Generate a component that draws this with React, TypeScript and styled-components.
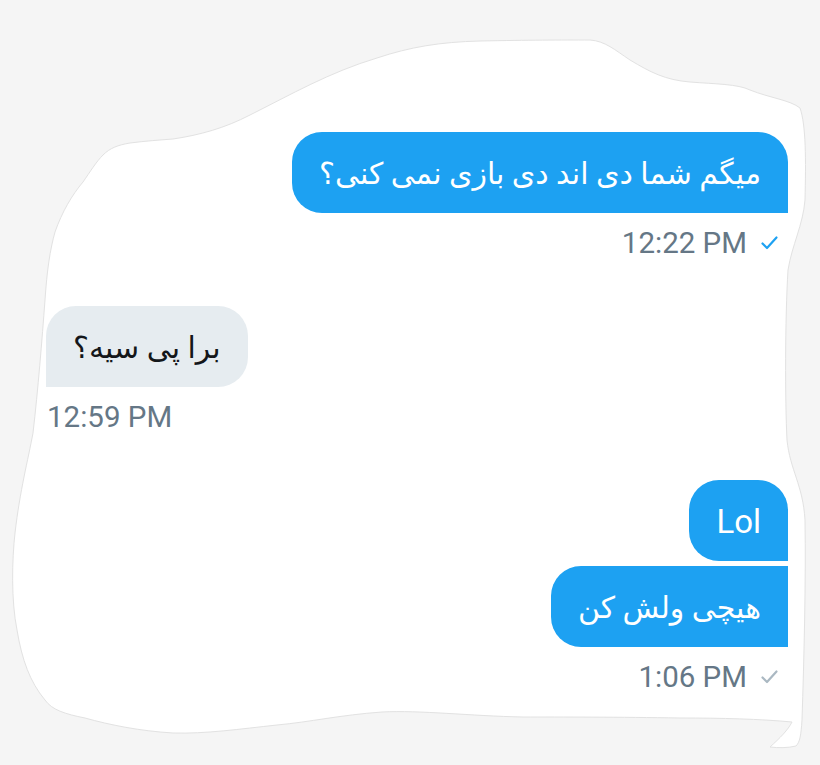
import React from 'react';
import styled, { createGlobalStyle } from 'styled-components';

const GlobalStyle = createGlobalStyle`
  html, body {
    margin: 0;
    padding: 0;
    background: #f5f5f5;
  }
`;

const StyledPage = styled.div`
  position: relative;
  width: 820px;
  height: 765px;
  overflow: hidden;
  background: #f5f5f5;
  font-family: Roboto, 'DejaVu Sans', sans-serif;
`;

const StyledPaper = styled.svg`
  position: absolute;
  inset: 0;
`;

const StyledThread = styled.div`
  position: relative;
  display: flex;
  flex-direction: column;
  padding: 132px 32px 0 46px;
`;

const StyledGroup = styled.div<{ $mine?: boolean }>`
  display: flex;
  flex-direction: column;
  align-items: ${(p) => (p.$mine ? 'flex-end' : 'flex-start')};
  gap: 5px;
  & + & {
    margin-top: 43px;
  }
`;

type Corner = 'first' | 'last' | 'single';

const StyledBubble = styled.div<{ $mine?: boolean; $place: Corner; $latin?: boolean }>`
  box-sizing: border-box;
  height: 81px;
  display: flex;
  align-items: center;
  padding: 2px ${(p) => (p.$latin ? '27px' : '27px')} 0;
  font-size: ${(p) => (p.$latin ? '33px' : '30px')};
  line-height: 41px;
  white-space: nowrap;
  background: ${(p) => (p.$mine ? '#1da1f2' : '#e6ecf0')};
  color: ${(p) => (p.$mine ? '#ffffff' : '#14171a')};
  border-radius: ${(p) => {
    if (!p.$mine) return '30px 30px 30px 0';
    if (p.$place === 'last') return '30px 0 0 30px';
    return '30px 30px 0 30px';
  }};
`;

const StyledMeta = styled.div`
  display: flex;
  align-items: center;
  gap: 14px;
  margin-top: 5px;
  height: 40px;
  font-size: 29.5px;
  color: #657786;
  padding-left: 1px;
`;

const Check = ({ read }: { read?: boolean }) => (
  <svg width="17" height="16" viewBox="0 0 17 16" style={{ marginRight: 10 }}>
    <path
      d="M1.5 8.5 L6 13 L15.5 2.5"
      fill="none"
      stroke={read ? '#1da1f2' : '#aab8c2'}
      strokeWidth="2.2"
      strokeLinecap="round"
      strokeLinejoin="round"
    />
  </svg>
);

const paperPath =
  'M130 143 C145 141 160 140 173 139 C200 135 225 128 250 115 C290 95 330 72 377 58 ' +
  'C410 47 440 42 480 41 C530 40 560 40 590 40 C605 41 615 50 630 60 C650 72 665 80 690 82 ' +
  'C715 84 738 84 750 90 C770 98 790 100 800 108 C806 125 806 160 805 200 ' +
  'C803 225 792 245 788 270 C785 320 785 400 787 440 C790 470 803 485 805 520 ' +
  'C806 580 804 660 802 720 C801 735 800 742 796 746 C788 748 778 748 770 747 ' +
  'C780 738 788 730 792 722 C760 719 722 718 680 718 C620 717 560 717 523 717 ' +
  'C470 716 420 710 382 712 C340 715 310 722 277 725 C240 729 205 734 173 733 ' +
  'C140 731 110 725 85 718 C65 714 52 710 45 700 C30 682 22 660 17 630 ' +
  'C11 600 12 560 15 533 C20 490 28 460 33 433 C38 390 42 340 45 300 ' +
  'C47 270 50 250 55 232 C62 212 72 195 83 182 C90 172 96 162 103 155 ' +
  'C110 148 118 145 130 143 Z';

export default function App() {
  return (
    <StyledPage>
      <GlobalStyle />
      <StyledPaper width="820" height="765" viewBox="0 0 820 765">
        <path d={paperPath} fill="#ffffff" stroke="#e2e2e2" strokeWidth="1" />
      </StyledPaper>
      <StyledThread>
        <StyledGroup $mine>
          <StyledBubble $mine $place="single" dir="rtl">
            میگم شما دی اند دی بازی نمی کنی؟
          </StyledBubble>
          <StyledMeta>
            12:22 PM
            <Check read />
          </StyledMeta>
        </StyledGroup>
        <StyledGroup>
          <StyledBubble $place="single" dir="rtl">
            برا پی سیه؟
          </StyledBubble>
          <StyledMeta>12:59 PM</StyledMeta>
        </StyledGroup>
        <StyledGroup $mine>
          <StyledBubble $mine $place="first" $latin>
            Lol
          </StyledBubble>
          <StyledBubble $mine $place="last" dir="rtl">
            هیچی ولش کن
          </StyledBubble>
          <StyledMeta>
            1:06 PM
            <Check />
          </StyledMeta>
        </StyledGroup>
      </StyledThread>
    </StyledPage>
  );
}
